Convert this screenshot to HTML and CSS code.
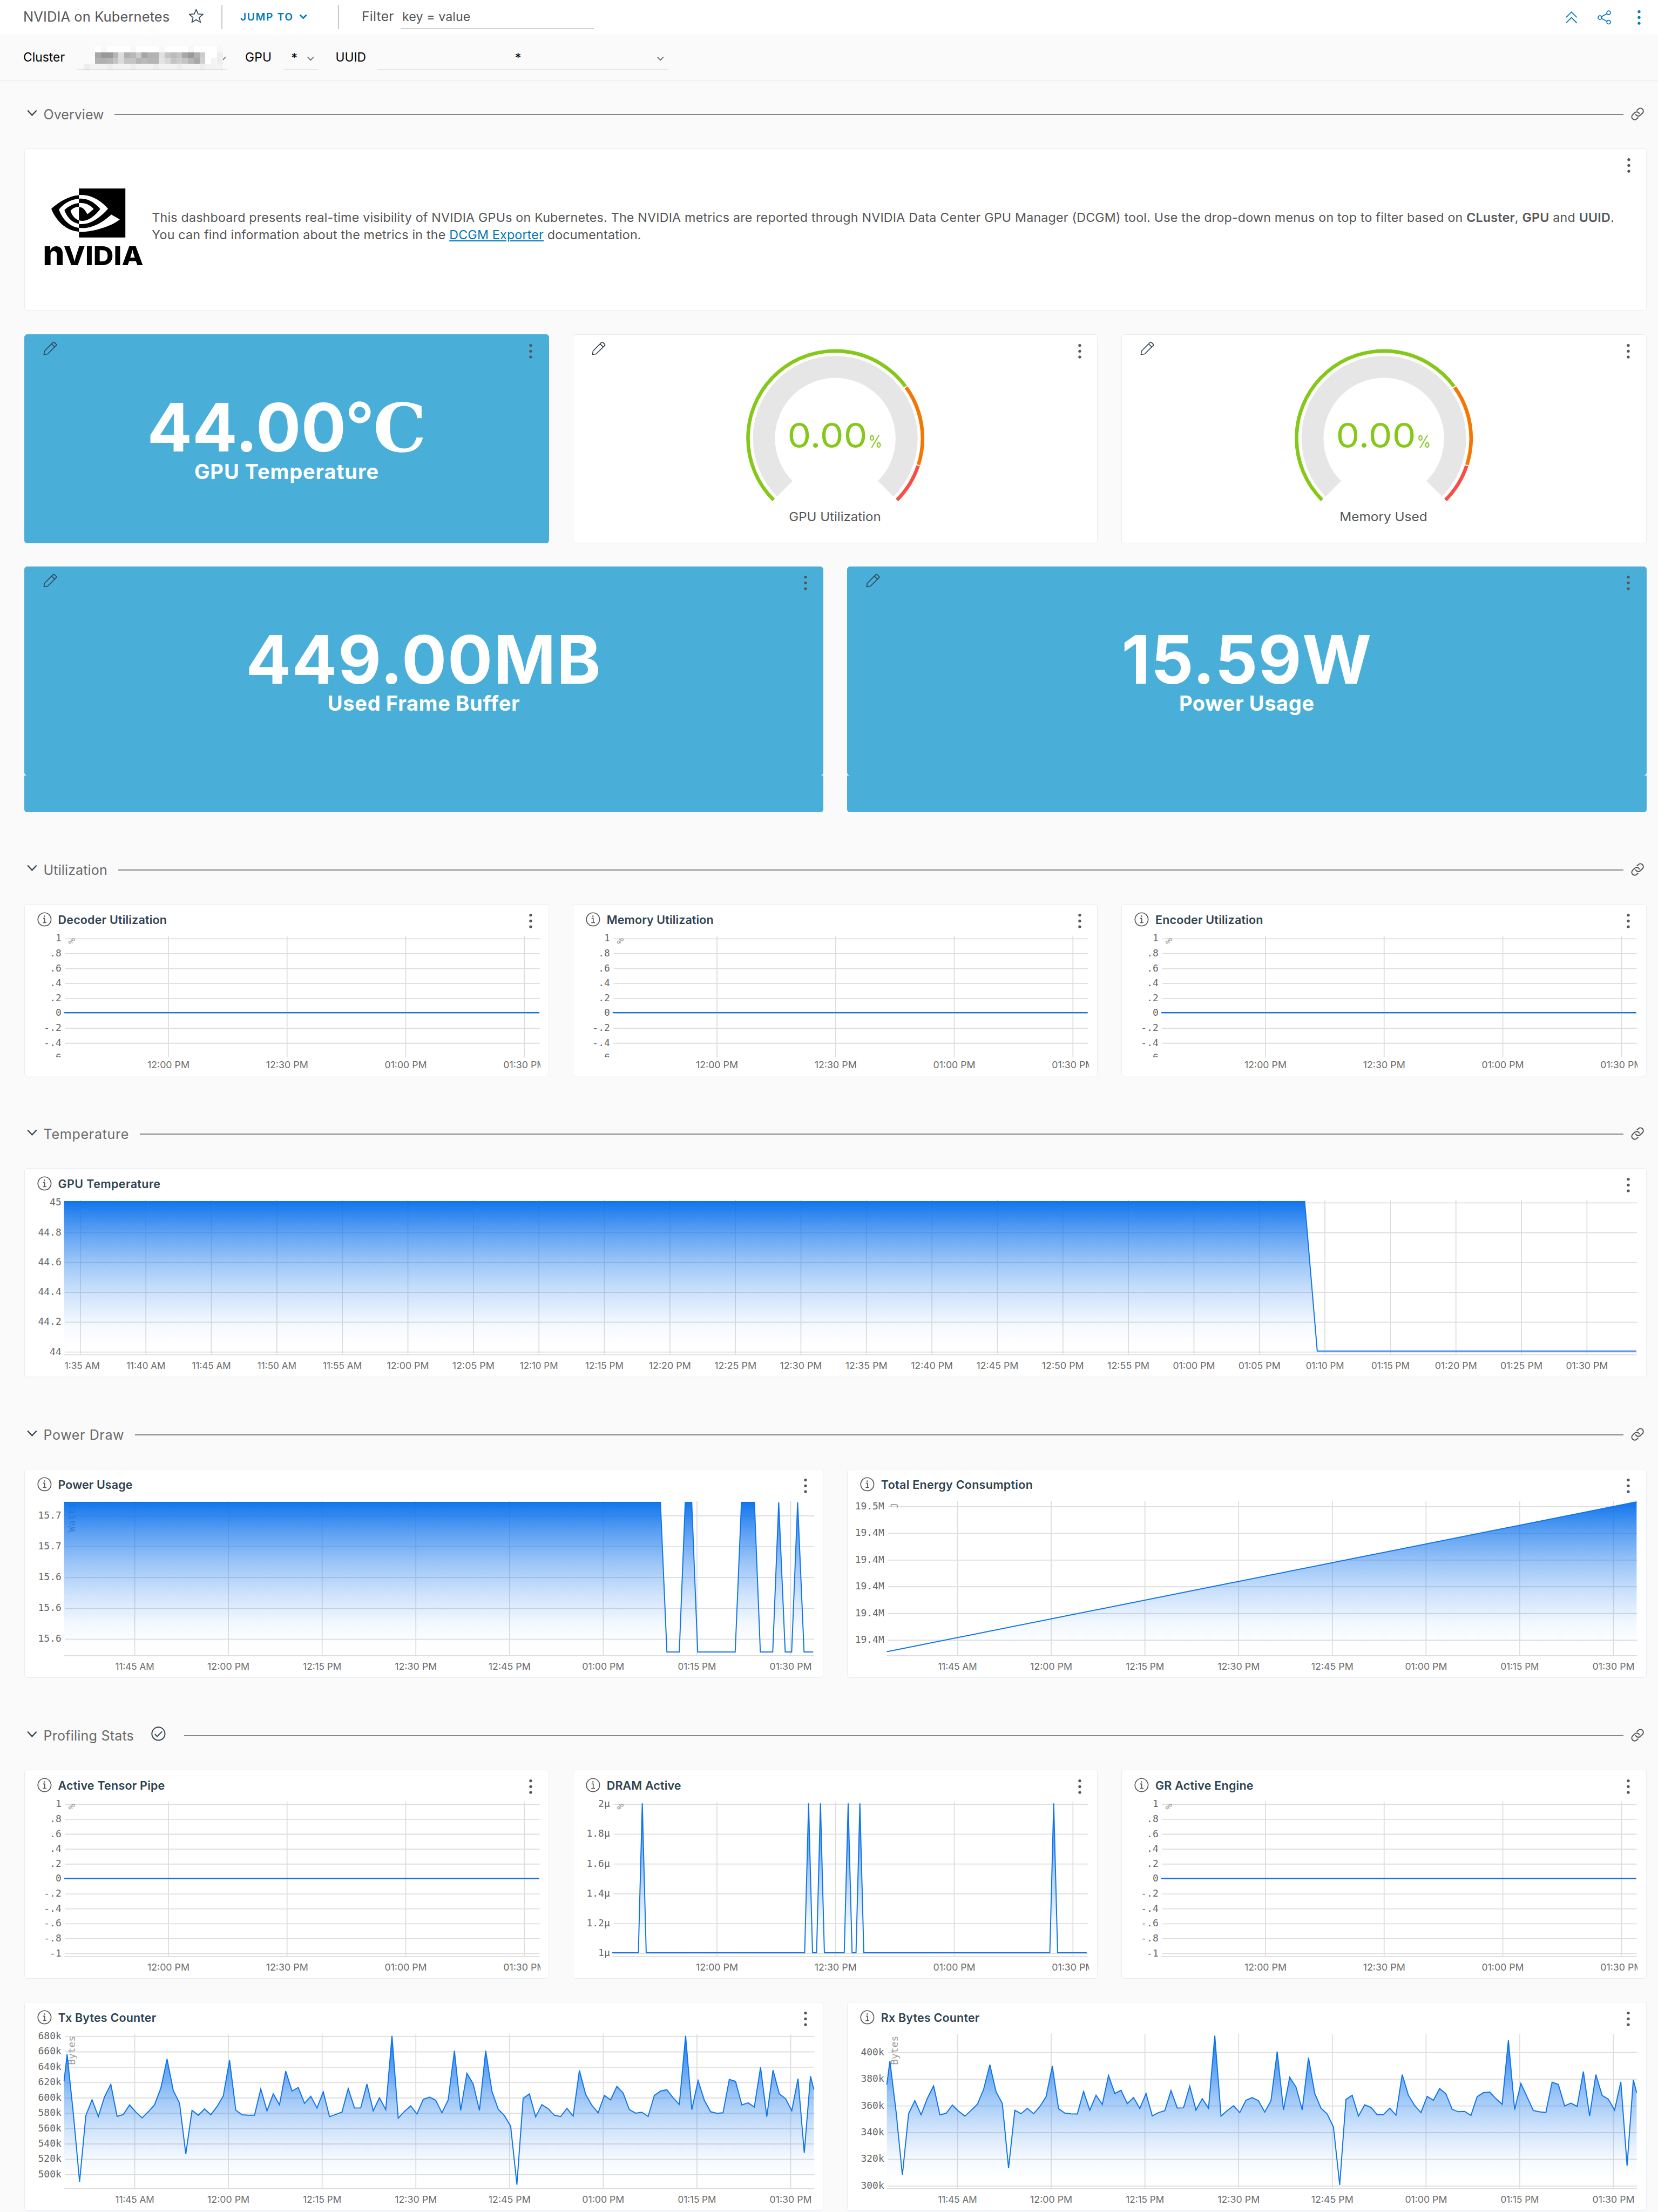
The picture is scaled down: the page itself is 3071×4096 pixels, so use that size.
FILE: index.html
```html
<!DOCTYPE html>
<html lang="en">
<head>
<meta charset="utf-8">
<title>NVIDIA on Kubernetes</title>
<link rel="stylesheet" href="styles.css">
</head>
<body>
<svg class="defs" aria-hidden="true">
  <symbol id="kebab" viewBox="0 0 20 32"><circle cx="10" cy="4" r="3"/><circle cx="10" cy="16" r="3"/><circle cx="10" cy="28" r="3"/></symbol>
  <symbol id="info" viewBox="0 0 30 30"><g fill="none" stroke="currentColor" stroke-width="1.9"><circle cx="15" cy="15" r="13.6"/><path d="M12 12.8h3.4v8.8M11.4 21.8h7.6"/></g><circle cx="14.8" cy="8.4" r="1.5"/></symbol>
  <symbol id="pencil" viewBox="0 0 30 30"><g fill="none" stroke="currentColor" stroke-width="1.8" stroke-linejoin="round"><path d="M1.6 28.4l1.2-7.6L21 2.4c.9-.9 2-.9 2.900 0l3.800 3.800c.9.900.900 2 0 2.900L9.400 27.200z"/><path d="M18 5.600l6.600 6.600"/></g></symbol>
  <symbol id="caret" viewBox="0 0 20 13"><path d="M1.2 1.6L10 11l8.800-9.400" fill="none" stroke="currentColor" stroke-width="2.4"/></symbol>
  <symbol id="link" viewBox="0 0 27 27"><g fill="none" stroke="currentColor" stroke-width="2.3" stroke-linecap="round"><path d="M12.6 5.900L15.6 3a6.050 6.050 0 0 1 8.500 8.500L19.400 16a6.050 6.050 0 0 1-9.600-1.500"/><path d="M14.400 21.100L11.400 24a6.050 6.050 0 0 1-8.500-8.500L7.600 11a6.050 6.050 0 0 1 9.600 1.500"/></g></symbol>
</svg>

<header class="topbar">
  <h1 class="title" data-w="303">NVIDIA on Kubernetes</h1>
  <svg class="star" viewBox="0 0 32 30"><path d="M16 1.800l4 9.200 10.200.8-7.800 6.500 2.500 10.100-8.900-5.500-8.900 5.500 2.500-10.100L1.800 11.800 12 11z" fill="none" stroke="currentColor" stroke-width="1.800" stroke-linejoin="round"/></svg>
  <i class="divider"></i>
  <button class="jump"><span data-w="110">JUMP TO</span><svg viewBox="0 0 20 13"><path d="M2 2l8 8 8-8" fill="none" stroke="currentColor" stroke-width="3.600"/></svg></button>
  <i class="divider second"></i>
  <label class="filter"><span data-w="67">Filter</span><span class="filter-input"><span data-w="141">key = value</span></span></label>
  <nav class="actions">
    <svg class="collapse" viewBox="0 0 24 26"><path d="M1 13.500L12 2.500l11 11M1 25L12 14l11 11" fill="none" stroke="currentColor" stroke-width="2"/></svg>
    <svg class="share" viewBox="0 0 28 30"><g fill="none" stroke="currentColor" stroke-width="1.900"><circle cx="5" cy="15" r="3.800"/><circle cx="23" cy="5" r="3.800"/><circle cx="23" cy="24.700" r="3.800"/><path d="M8.400 13.200L19.600 6.900M8.400 16.900l11.200 5.900"/></g></svg>
    <svg class="kebab"><use href="#kebab"/></svg>
  </nav>
</header>

<div class="filters">
  <span class="name" data-w="86">Cluster</span>
  <span class="select cluster"><svg><use href="#caret"/></svg><span class="mosaic" id="mosaic"></span></span>
  <span class="name gpu-name" data-w="55">GPU</span>
  <span class="select gpu"><span>*</span><svg><use href="#caret"/></svg></span>
  <span class="name uuid-name" data-w="63">UUID</span>
  <span class="select uuid"><span>*</span><svg><use href="#caret"/></svg></span>
</div>

<main>
  <div class="section first"><svg class="caret"><use href="#caret"/></svg><h2 data-w="125">Overview</h2><hr><svg class="link"><use href="#link"/></svg></div>
  <section class="card about">
    <svg class="logo" viewBox="0 0 206 160">
      <g transform="translate(14.600 -25.900) scale(6.380)"><path d="M8.948 8.798v-1.430a6.700 6.700 0 0 1 .424-.018c3.922-.124 6.493 3.374 6.493 3.374s-2.774 3.851-5.750 3.851c-.398 0-.787-.062-1.158-.185v-4.346c1.528.185 1.837.857 2.747 2.385l2.040-1.714s-1.492-1.952-4-1.952a6.016 6.016 0 0 0-.796.035m0-4.735v2.138l.424-.027c5.450-.185 9.010 4.470 9.010 4.470s-4.080 4.964-8.330 4.964c-.370 0-.733-.035-1.095-.097v1.325c.300.035.610.062.910.062 3.957 0 6.820-2.023 9.593-4.408.459.371 2.340 1.263 2.730 1.652-2.633 2.208-8.772 3.984-12.253 3.984-.335 0-.653-.018-.971-.053v1.864H24V4.063zm0 10.326v1.131c-3.657-.654-4.673-4.460-4.673-4.460s1.758-1.944 4.673-2.262v1.237H8.940c-1.528-.186-2.730 1.245-2.730 1.245s.680 2.412 2.739 3.110M2.456 10.900s2.164-3.197 6.500-3.533V6.201C4.153 6.590 0 10.653 0 10.653s2.350 6.802 8.948 7.420v-1.237c-4.840-.600-6.492-5.936-6.492-5.936z"/></g>
      <text class="wordmark" y="158"><tspan x="-3" font-size="71">n</tspan><tspan x="40" font-size="54" textLength="165" lengthAdjust="spacingAndGlyphs">VIDIA</tspan></text>
    </svg>
    <div class="about-text">
      <p><span data-w="3024">This dashboard presents real-time visibility of NVIDIA GPUs on Kubernetes. The NVIDIA metrics are reported through NVIDIA Data Center GPU Manager (DCGM) tool. Use the drop-down menus on top to filter based on <b>CLuster</b>, <b>GPU</b> and <b>UUID</b>.</span></p>
      <p><span data-w="1012">You can find information about the metrics in the <a>DCGM Exporter</a> documentation.</span></p>
    </div>
    <svg class="kebab"><use href="#kebab"/></svg>
  </section>

  <div class="row three">
    <section class="card tile">
      <div class="head"><svg class="pencil"><use href="#pencil"/></svg><svg class="kebab"><use href="#kebab"/></svg></div>
      <div class="value"><span data-w="412">44.00</span><span class="unit">℃</span></div>
      <div class="caption"><span data-w="382">GPU Temperature</span></div>
    </section>
    <section class="card">
      <div class="head"><svg class="pencil"><use href="#pencil"/></svg><svg class="kebab"><use href="#kebab"/></svg></div>
      <svg class="plot" data-gauge="GPU Utilization" data-lw="190"></svg>
    </section>
    <section class="card">
      <div class="head"><svg class="pencil"><use href="#pencil"/></svg><svg class="kebab"><use href="#kebab"/></svg></div>
      <svg class="plot" data-gauge="Memory Used" data-lw="181"></svg>
    </section>
  </div>

  <div class="row two">
    <div>
      <section class="card tile">
        <div class="head"><svg class="pencil"><use href="#pencil"/></svg><svg class="kebab"><use href="#kebab"/></svg></div>
        <div class="value"><span data-w="736">449.00MB</span></div>
        <div class="caption"><span data-w="398">Used Frame Buffer</span></div>
      </section>
      <div class="tile-foot"></div>
    </div>
    <div>
      <section class="card tile">
        <div class="head"><svg class="pencil"><use href="#pencil"/></svg><svg class="kebab"><use href="#kebab"/></svg></div>
        <div class="value"><span data-w="518">15.59W</span></div>
        <div class="caption"><span data-w="280">Power Usage</span></div>
      </section>
      <div class="tile-foot"></div>
    </div>
  </div>

  <div class="section"><svg class="caret"><use href="#caret"/></svg><h2 data-w="132">Utilization</h2><hr><svg class="link"><use href="#link"/></svg></div>
  <div class="row three short">
    <section class="card"><div class="head"><svg class="info"><use href="#info"/></svg><h3 data-w="225">Decoder Utilization</h3><svg class="kebab"><use href="#kebab"/></svg></div><svg class="plot" data-chart="flatShort"></svg></section>
    <section class="card"><div class="head"><svg class="info"><use href="#info"/></svg><h3 data-w="221">Memory Utilization</h3><svg class="kebab"><use href="#kebab"/></svg></div><svg class="plot" data-chart="flatShort"></svg></section>
    <section class="card"><div class="head"><svg class="info"><use href="#info"/></svg><h3 data-w="223">Encoder Utilization</h3><svg class="kebab"><use href="#kebab"/></svg></div><svg class="plot" data-chart="flatShort"></svg></section>
  </div>

  <div class="section"><svg class="caret"><use href="#caret"/></svg><h2 data-w="177">Temperature</h2><hr><svg class="link"><use href="#link"/></svg></div>
  <div class="row">
    <section class="card"><div class="head"><svg class="info"><use href="#info"/></svg><h3 data-w="212">GPU Temperature</h3><svg class="kebab"><use href="#kebab"/></svg></div><svg class="plot" data-chart="temperature"></svg></section>
  </div>

  <div class="section"><svg class="caret"><use href="#caret"/></svg><h2 data-w="167">Power Draw</h2><hr><svg class="link"><use href="#link"/></svg></div>
  <div class="row two">
    <section class="card"><div class="head"><svg class="info"><use href="#info"/></svg><h3 data-w="154">Power Usage</h3><svg class="kebab"><use href="#kebab"/></svg></div><svg class="plot" data-chart="power"></svg></section>
    <section class="card"><div class="head"><svg class="info"><use href="#info"/></svg><h3 data-w="314">Total Energy Consumption</h3><svg class="kebab"><use href="#kebab"/></svg></div><svg class="plot" data-chart="energy"></svg></section>
  </div>

  <div class="section"><svg class="caret"><use href="#caret"/></svg><h2 data-w="187">Profiling Stats</h2><svg class="check" viewBox="0 0 30 30"><g fill="none" stroke="currentColor" stroke-width="2.200"><circle cx="15" cy="15" r="13.500"/><path d="M7.500 15.500l5 5.200L22.500 10.200"/></g></svg><hr><svg class="link"><use href="#link"/></svg></div>
  <div class="row three">
    <section class="card"><div class="head"><svg class="info"><use href="#info"/></svg><h3 data-w="221">Active Tensor Pipe</h3><svg class="kebab"><use href="#kebab"/></svg></div><svg class="plot" data-chart="flatTall"></svg></section>
    <section class="card"><div class="head"><svg class="info"><use href="#info"/></svg><h3 data-w="154">DRAM Active</h3><svg class="kebab"><use href="#kebab"/></svg></div><svg class="plot" data-chart="dram"></svg></section>
    <section class="card"><div class="head"><svg class="info"><use href="#info"/></svg><h3 data-w="203">GR Active Engine</h3><svg class="kebab"><use href="#kebab"/></svg></div><svg class="plot" data-chart="flatTall"></svg></section>
  </div>
  <div class="row two">
    <section class="card"><div class="head"><svg class="info"><use href="#info"/></svg><h3 data-w="203">Tx Bytes Counter</h3><svg class="kebab"><use href="#kebab"/></svg></div><svg class="plot" data-chart="tx"></svg></section>
    <section class="card"><div class="head"><svg class="info"><use href="#info"/></svg><h3 data-w="204">Rx Bytes Counter</h3><svg class="kebab"><use href="#kebab"/></svg></div><svg class="plot" data-chart="rx"></svg></section>
  </div>
</main>
<script>
const THIRD = 1085.67, HALF = 1653, FULL = 3355;
const range = (n, f) => Array.from({ length: n }, (_, i) => f(i));

// Minute samples, as plot heights in thirds of a pixel below the panel origin.
const TX = [382,750,1172,762,664,768,645,568,767,755,696,740,776,738,695,592,412,607,685,1000,730,760,721,757,706,640,418,728,757,760,760,597,733,627,695,487,610,588,686,642,715,615,769,755,740,595,715,715,566,733,652,725,268,778,736,702,752,662,648,667,745,665,360,730,500,566,730,360,612,722,762,828,1190,655,628,770,694,719,760,768,717,765,482,630,698,745,637,665,581,622,725,747,741,767,637,610,602,652,693,267,725,545,667,738,748,745,538,550,696,683,709,463,768,480,627,657,732,533,993,518];
const RX = [424,740,1132,750,670,757,655,578,757,748,697,735,765,730,692,600,447,615,687,1088,729,750,717,750,706,645,455,720,746,751,752,613,728,636,693,513,625,605,688,650,718,625,764,743,732,607,715,714,580,728,657,716,266,765,731,701,743,667,650,670,740,670,366,727,525,585,727,403,625,716,752,833,1192,662,636,765,695,711,756,756,716,759,508,637,700,743,643,667,594,627,723,738,736,761,645,620,616,657,692,295,725,563,647,731,739,743,555,569,702,685,705,489,765,508,637,661,728,553,1073,540];
const minutes = (data, first, last) => [
  [84, first / 3 - 19.3],
  ...data.map((v, i) => [90.3 + 12.907 * i, v / 3 - 19.3]),
  [1633, last / 3 - 19.3]
];

const T30 = ['12:00 PM', '12:30 PM', '01:00 PM', '01:30 PM'];
const T15 = ['11:45 AM', '12:00 PM', '12:15 PM', '12:30 PM', '12:45 PM', '01:00 PM', '01:15 PM', '01:30 PM'];
const T5 = range(24, i => {
  const m = 11 * 60 + 35 + i * 5, h = Math.floor(m / 60);
  const two = n => String(n).padStart(2, '0');
  return two(h > 12 ? h - 12 : h) + ':' + two(m % 60) + (h < 12 ? ' AM' : ' PM');
});
const x30 = T30.map((t, i) => [299.5 + 245 * i, t]);
const x15 = T15.map((t, i) => [230 + 193.6 * i, t]);
const x5 = T5.map((t, i) => [117.8 + 135.4 * i, t]);
const ys = (labels, y0, step) => labels.map((t, i) => [y0 + step * i, t]);

const powerX = [[1224,0],[1236,1],[1259,1],[1270,0],[1282,0],[1293,1],[1362.5,1],[1374,0],[1398,0],[1409,1],[1432,1],[1443,0],[1455,1],[1467,1],[1478,0],[1490,1],[1507,1]];
const spikes = [200, 689.5, 724.5, 806, 840.5, 1411];

const charts = {
  flatShort: { w: THIRD, h: 356, right: 1066, bottom: 316, noAxis: true, x: x30, timeY: 339, unit: '%',
    y: ys(['1', '.8', '.6', '.4', '.2', '0', '-.2', '-.4', '-.6'], 71.7, 30.8), pts: [[84, 224.2], [1065, 224.2]], flat: true },
  flatTall: { w: THIRD, h: 432, right: 1066, x: x30, unit: '%',
    y: ys(['1', '.8', '.6', '.4', '.2', '0', '-.2', '-.4', '-.6', '-.8', '-1'], 71.6, 30.8), pts: [[84, 224.2], [1065, 224.2]], flat: true },
  dram: { w: THIRD, h: 432, right: 1066, x: x30, unit: '%',
    y: ys(['2µ', '1.8µ', '1.6µ', '1.4µ', '1.2µ', '1µ'], 71.5, 61.6),
    pts: [[83, 378], ...spikes.flatMap(s => [[s - 11.5, 378], [s, 69.5], [s + 11.5, 378]].map(([x, y]) => [x / 1.4255 + 5, y])), [1063, 378]] },
  temperature: { w: FULL, h: 432, right: 3335.5, x: x5, y: ys(['45', '44.8', '44.6', '44.4', '44.2', '44'], 71.8, 61.65),
    pts: [[84, 69], [2648.5, 69], [2674.5, 378], [3334, 378]] },
  power: { w: HALF, h: 432, right: 1634, x: x15, unit: 'Watts', y: ys(['15.7', '15.7', '15.6', '15.6', '15.6'], 97, 63.7),
    pts: [[84, 69], ...powerX.map(([x, low]) => [x / .896 - 50, low ? 378 : 69])] },
  energy: { w: HALF, h: 432, right: 1634, x: x15, unit: 'J', y: ys(['19.5M', '19.4M', '19.4M', '19.4M', '19.4M', '19.4M'], 77.8, 55.2),
    pts: [[84, 377.5], [1633, 68]] },
  tx: { w: HALF, h: 432, right: 1634, x: x15, unit: 'Bytes', y: ys(range(10, i => 680 - 20 * i + 'k'), 71.4, 31.7), pts: minutes(TX, 550, 600) },
  rx: { w: HALF, h: 432, right: 1634, x: x15, unit: 'Bytes', y: ys(range(6, i => 400 - 20 * i + 'k'), 104.4, 55.15), pts: minutes(RX, 570, 620) }
};

function timeWidth(t) {
  return 95 - 8 * (t.split('1').length - 1) + (t.endsWith('AM') ? 1.5 : 0);
}

function drawChart(svg, c, id) {
  const bottom = c.bottom || 385.6, timeY = c.timeY || 414.7, line = (x1, y1, x2, y2) => `<line x1="${x1}" y1="${y1}" x2="${x2}" y2="${y2}"/>`;
  svg.setAttribute('viewBox', `3 54.6 ${c.w - 4} ${c.h - 58}`);
  let s = `<defs><linearGradient id="${id}g" gradientUnits="userSpaceOnUse" x1="0" x2="0" y1="68" y2="385">
    ${[[0, .96], [.1, .81], [.2, .66], [.4, .4], [.6, .2], [.8, .045], [.94, 0]].map(([o, a]) => `<stop offset="${o}" stop-color="#0870ec" stop-opacity="${a}"/>`).join('')}
    </linearGradient>
    <clipPath id="${id}y"><rect x="0" y="54" width="${c.w}" height="${c.bottom ? bottom - 54 : c.h}"/></clipPath>
    <clipPath id="${id}x"><rect x="84" y="${timeY - 30}" width="${c.right - 82}" height="50"/></clipPath></defs>`;
  s += '<g class="grid">' + c.x.map(([x]) => line(x, 66, x, bottom)).join('');
  s += c.y.filter(([y]) => y < bottom).map(([y]) => line(86, y, c.right, y)).join('');
  if (!c.noAxis) s += line(84, bottom, c.right, bottom);
  s += '</g>';
  if (c.unit) s += `<text class="measure" transform="translate(107 70) rotate(-90)">${c.unit}</text>`;
  const path = 'M' + c.pts.map(p => p.map(n => n.toFixed(1)).join(' ')).join('L');
  if (!c.flat) s += `<path d="${path}L${c.pts[c.pts.length - 1][0]} 378L84 378Z" fill="url(#${id}g)"/>`;
  s += `<path class="series${c.flat ? ' flat' : ''}" d="${path}"/>`;
  s += `<g clip-path="url(#${id}y)">` + c.y.map(([y, t]) => `<text class="tick" text-anchor="end" x="78.5" y="${y + 5.6}">${t}</text>`).join('') + '</g>';
  s += `<g clip-path="url(#${id}x)">` + c.x.map(([x, t]) => `<text class="time" x="${x}" y="${timeY}" textLength="${timeWidth(t)}" lengthAdjust="spacingAndGlyphs">${t}</text>`).join('') + '</g>';
  svg.innerHTML = s;
}

function arc(r, from, to) {
  const at = a => { const t = a * Math.PI / 180; return `${542.8 + r * Math.sin(t)} ${216 - r * Math.cos(t)}`; };
  return `M${at(from)}A${r} ${r} 0 ${to - from > 180 ? 1 : 0} 1 ${at(to)}`;
}

function drawGauge(svg) {
  const ring = (r, a, b, color, w) => `<path d="${arc(r, a, b)}" fill="none" stroke="${color}" stroke-width="${w}"/>`;
  svg.setAttribute('viewBox', `2 56 ${THIRD - 4} 374`);
  svg.style.overflow = 'visible';
  svg.innerHTML = ring(147.3, -135, 135, '#e6e6e6', 45.5)
    + ring(180.2, -135, 53.6, '#85c81a', 7.4) + ring(180.2, 54.3, 107.7, '#f57600', 7.4) + ring(180.2, 108.4, 135, '#f54f47', 7.4)
    + '<text class="gauge-value" x="444" y="235.500" textLength="165" lengthAdjust="spacingAndGlyphs">0.00</text>'
    + '<text class="gauge-unit" x="611" y="235.500" textLength="29" lengthAdjust="spacingAndGlyphs">%</text>'
    + `<text class="gauge-label" x="542" y="387" textLength="${svg.dataset.lw}" lengthAdjust="spacingAndGlyphs">${svg.dataset.gauge}</text>`;
}

document.querySelectorAll('[data-chart]').forEach((el, i) => drawChart(el, charts[el.dataset.chart], 'c' + i));
document.querySelectorAll('[data-gauge]').forEach(drawGauge);

// Obscured cluster name: four rows of grey cells, two hex digits per cell.
const blank = '  ';
const cells = [
  blank.repeat(2) + range(22, i => i % 5 === 1 ? 'f7' : 'ff').join(''),
  blank.repeat(2) + 'a89999b5ddb0b8cca5b3b3e0c4bbc4a899b0cc' + 'ffffee',
  blank.repeat(2) + 'b0b0b5c4dcc4c4b5bbb5b5e4d8c4ccc4b5a8d0' + 'fff4ee',
  range(24, i => i % 4 ? 'f3' : 'ee').join('')
].join('').match(/../g);
document.getElementById('mosaic').innerHTML = cells
  .map(c => `<i style="background:${c === blank ? 'transparent' : '#' + c + c + c}"></i>`).join('');

// Tracks each label out to its design width.
const rem = parseFloat(getComputedStyle(document.documentElement).fontSize);
document.querySelectorAll('[data-w]').forEach(el => {
  const r = document.createRange();
  r.selectNodeContents(el);
  const gap = el.dataset.w * rem / 10 - r.getBoundingClientRect().width;
  el.style.letterSpacing = gap / el.textContent.length + 'px';
});
</script>
</body>
</html>
```
FILE: styles.css
```css
* { box-sizing: border-box; }

/* 1rem is ten design pixels */
html { font-size: 8.9565px; }

body {
  margin: 0;
  height: 100vh;
  overflow: hidden;
  background: #fafafa;
  color: #565656;
  font-family: Inter, "Open Sans", sans-serif;
  font-size: 2.6rem;
}

svg { display: block; fill: currentColor; flex: none; }
.defs { position: absolute; width: 0; height: 0; }
h1, h2, h3, p { margin: 0; font-weight: 400; }
[data-w] { display: inline-block; white-space: nowrap; flex: none; }
.kebab { width: 2rem; height: 3.2rem; }

.topbar {
  display: flex;
  align-items: center;
  height: 7.1rem;
  padding: 0 2.9rem 0 4.8rem;
  background: #fff;
}
.title { font-size: 2.85rem; line-height: 4rem; margin-top: -.3rem; width: 30.4rem; }
.star { width: 3.2rem; height: 3rem; margin: -.5rem 0 0 3.8rem; color: #2d4250; }
.divider { width: .2rem; height: 5rem; margin-left: 3.6rem; background: #c8c8c8; flex: none; }
.jump {
  display: flex;
  align-items: center;
  gap: 1.2rem;
  width: 23.9rem;
  padding: 0 0 0 3.7rem;
  margin-top: -.1rem;
  border: 0;
  background: none;
  color: #0079b8;
  font: 600 2.15rem/3rem Inter, sans-serif;
}
.jump svg { width: 1.7rem; height: 1.1rem; }
.divider.second { margin-left: 0; }
.filter { display: flex; align-items: flex-start; height: 5rem; margin-left: 4.7rem; }
.filter > span:first-child { font-size: 2.75rem; line-height: 4.8rem; width: 8rem; }
.filter-input {
  width: 40rem;
  height: 5rem;
  padding-left: .4rem;
  border-bottom: .2rem solid #565656;
  font-size: 2.6rem;
  line-height: 4.9rem;
}
.actions { display: flex; align-items: center; margin-left: auto; color: #0079b8; }
.collapse { width: 2.4rem; height: 2.6rem; margin-right: 4.2rem; }
.share { width: 2.8rem; height: 3rem; margin-right: 4.8rem; margin-top: .2rem; }
.actions .kebab { margin-top: .2rem; }

.filters {
  display: flex;
  align-items: flex-start;
  height: 9.6rem;
  padding: 2.7rem 0 0 4.8rem;
  border-bottom: .2rem solid #eee;
  color: #000;
}
.filters .name { font-size: 2.55rem; line-height: 4.1rem; width: 11.1rem; }
.filters .gpu-name { margin-left: 3.7rem; width: 8rem; }
.filters .uuid-name { margin-left: 3.8rem; width: 8.7rem; }
.select {
  position: relative;
  display: flex;
  align-items: center;
  justify-content: center;
  height: 4.7rem;
  border-bottom: .2rem solid #999;
}
.select > svg { width: 1.4rem; height: 1rem; color: #565656; margin-top: .1rem; }
.select > span { line-height: 3rem; margin-top: -.2rem; }
.cluster { width: 31.1rem; justify-content: flex-end; padding-right: .3rem; }
.gpu { width: 6.9rem; gap: 2rem; padding-left: .8rem; }
.uuid { width: 60rem; padding: 0 .8rem 0 0; }
.uuid > span { margin: -.2rem auto 0 28.4rem; }
.select > .mosaic {
  position: absolute;
  left: 1.4rem;
  top: 0;
  display: grid;
  grid-template-columns: repeat(24, 1.2rem);
  grid-auto-rows: 1.2rem;
  line-height: 0;
}

main { padding: 0 2.4rem 0 5rem; }

.section { display: flex; align-items: center; height: 19rem; padding: 5rem .5rem 0 .6rem; }
.section.first { height: 14rem; padding-top: 0; }
.section .caret { width: 2.1rem; height: 1.365rem; margin-top: -.8rem; color: #2d4250; }
.section h2 { font-size: 2.8rem; line-height: 4rem; margin: .1rem 2.2rem 0 1.3rem; color: #6a6a6a; }
.section hr { flex: 1; height: .2rem; margin: 0; border: 0; background: #868686; }
.section .link { width: 2.7rem; height: 2.7rem; margin: -.3rem 0 0 1.500rem; color: #565656; }
.section .check { width: 3rem; height: 3rem; margin: -.8rem 3.8rem 0 1.400rem; color: #2d4250; }

.row { display: grid; grid-template-columns: minmax(0, 1fr); column-gap: 4.9rem; }
.row.three { grid-template-columns: repeat(3, minmax(0, 1fr)); }
.row.two { grid-template-columns: repeat(2, minmax(0, 1fr)); }
.row + .row { margin-top: 4.8rem; }
.about + .row { margin-top: 4.9rem; }

.card {
  height: 43.2rem;
  overflow: hidden;
  border: .2rem solid #e7ecf2;
  border-radius: .6rem;
  background: #fff;
}
.short .card { height: 35.6rem; }
.head { display: flex; align-items: center; height: 5.4rem; padding: .7rem 2.650rem 0 2.600rem; }
.head .kebab { margin: .6rem 0 0 auto; }
.head .info { width: 3rem; height: 3rem; }
.head .pencil { width: 2.9rem; height: 2.9rem; margin: -.4rem 0 0 1.200rem; color: #2d4250; }
.head h3 { margin: .2rem 0 0 1.300rem; font-size: 2.400rem; font-weight: 600; line-height: 3rem; color: #2d4250; }
.plot { width: 100%; height: auto; }

.about { display: flex; align-items: flex-start; height: 33.5rem; padding: 0 2.500rem 0 4rem; }
.logo { width: 20.6rem; height: 16rem; margin-top: 8.2rem; color: #000; }
.wordmark { font-family: Inter, sans-serif; font-weight: 800; }
.about-text { flex: 1; min-width: 0; margin: 12.400rem 0 0 1.700rem; }
.about-text p { line-height: 3.6rem; height: 3.6rem; }
.about .kebab { margin-top: 1.800rem; }
.about a { color: #0079b8; text-decoration: underline; }
.about b { font-weight: 600; }

.tile { border-color: #49afd9; background: #49afd9; color: #fff; text-align: center; }
.tile .head { color: #565656; }
.tile .value { margin-top: 6.900rem; font-size: 13.800rem; font-weight: 700; line-height: 1; height: 13.800rem; white-space: nowrap; }
.tile .unit { font-family: "Liberation Serif", "DejaVu Serif", serif; line-height: 0; }
.tile .caption { margin-top: 0; font-size: 4.250rem; font-weight: 650; line-height: 1; }
.tile-foot { height: 7.6rem; border-radius: 0 0 .6rem .6rem; background: #49afd9; }

.grid line { stroke: #dedede; stroke-width: 2; }
.tick { font: 20px "DejaVu Sans Mono", monospace; fill: #666; }
.time { font: 20px Inter, sans-serif; fill: #6b6b6b; text-anchor: middle; }
.measure { font: 20px "DejaVu Sans Mono", monospace; fill: #999; text-anchor: end; }
.series { fill: none; stroke: #0f74ec; stroke-width: 2.200; stroke-linejoin: miter; }
.series.flat { stroke-width: 2.600; }
.gauge-label { font: 26px Inter, sans-serif; fill: #565656; text-anchor: middle; }
.gauge-value { font: 400 71px Inter, sans-serif; fill: #85c81a; }
.gauge-unit { font: 400 35px Inter, sans-serif; fill: #85c81a; }
```
